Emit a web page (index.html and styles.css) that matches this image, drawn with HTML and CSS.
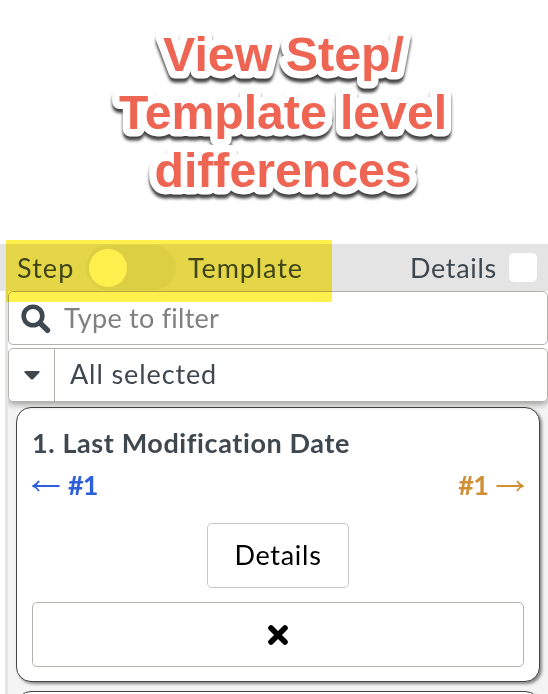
FILE: index.html
```html
<!DOCTYPE html>
<html lang="en">
<head>
<meta charset="utf-8">
<title>Differences</title>
<link rel="stylesheet" href="styles.css">
</head>
<body>
<header class="hero">
  <svg class="hero-title" width="548" height="240" viewBox="0 0 548 240">
    <defs>
      <g id="lines">
        <text x="283.5" y="71" textLength="241" lengthAdjust="spacingAndGlyphs">View Step/</text>
        <text x="283" y="129" textLength="328" lengthAdjust="spacingAndGlyphs">Template level</text>
        <text x="283" y="187" textLength="257" lengthAdjust="spacingAndGlyphs">differences</text>
      </g>
    </defs>
    <use class="hero-outline" href="#lines"/>
    <use class="hero-fill" href="#lines"/>
  </svg>
</header>
<div class="toolbar">
  <span class="label step">Step</span>
  <span class="toggle"><span class="knob"></span></span>
  <span class="label template">Template</span>
  <span class="label details">Details</span>
  <span class="checkbox"></span>
  <div class="highlight"></div>
</div>
<main class="panel">
  <div class="filters">
    <div class="field">
      <svg class="search" width="30" height="30" viewBox="0 0 30 30"><circle cx="12" cy="12" r="9.3" fill="none" stroke="currentColor" stroke-width="4.6"/><path d="M19.5 19.5L26.5 26.3" stroke="currentColor" stroke-width="5.4" stroke-linecap="round"/></svg>
      <span class="placeholder">Type to filter</span>
    </div>
    <div class="field select">
      <span class="arrow"><svg width="18" height="11" viewBox="0 0 18 11"><path d="M2 1H16Q17.3 1.4 16.3 2.8L10 9.2Q9 10 8 9.2L1.7 2.8Q.7 1.4 2 1Z" fill="currentColor"/></svg></span>
      <span class="selected">All selected</span>
    </div>
  </div>
  <section class="card">
    <h2>1. Last Modification Date</h2>
    <div class="refs">
      <span class="ref from"><svg width="28" height="12" viewBox="0 0 28 12"><path d="M27.500 6H1.500M7 1Q5 4.500 1 6Q5 7.500 7 11"/></svg><b>#1</b></span>
      <span class="ref to"><b>#1</b><svg width="28" height="12" viewBox="0 0 28 12"><path d="M.5 6H26.500M21 1Q23 4.500 27 6Q23 7.500 21 11"/></svg></span>
    </div>
    <div class="button details-button">Details</div>
    <div class="button close"><svg width="22" height="22" viewBox="0 0 22 22"><path d="M4 4L18 18M18 4L4 18" stroke="#000" stroke-width="5.600" stroke-linecap="round"/></svg></div>
  </section>
  <section class="card next"></section>
</main>
</body>
</html>
```

FILE: styles.css
```css
* { box-sizing: border-box; }
body {
  margin: 0;
  width: 548px;
  height: 694px;
  overflow: hidden;
  background: #fff;
  color: #3f484f;
  font: 27px/32px Lato, "Open Sans", sans-serif;
  font-variant-ligatures: none;
}
svg { display: block; flex: none; }
.hero { height: 244px; }
.hero-title {
  font: bold 49px "Liberation Sans", Arial, sans-serif;
  text-anchor: middle;
}
.hero-outline {
  fill: #fff;
  stroke: #fff;
  stroke-width: 15px;
  stroke-linejoin: round;
  filter: drop-shadow(0 4px 1.5px #444);
}
.hero-fill { fill: #ee6554; }
.toolbar {
  position: relative;
  display: flex;
  align-items: center;
  height: 47px;
  padding: 0 11px 0 17px;
  background: #e4e4e4;
}
.label { letter-spacing: .9px; }
.step { width: 69px; letter-spacing: 1.1px; }
.toggle {
  width: 90px;
  height: 45px;
  margin-right: 12px;
  padding: 4px 3px;
  border-radius: 23px;
  background: #dcdcdc;
}
.knob { display: block; width: 38px; height: 38px; border-radius: 50%; background: #fff; }
.details { margin-left: auto; margin-right: 12px; letter-spacing: .7px; }
.checkbox { width: 28px; height: 29px; border-radius: 5px; background: #fff; }
.highlight {
  position: absolute;
  z-index: 2;
  left: 6px;
  top: -4px;
  width: 326px;
  height: 62px;
  background: #fff04e;
  mix-blend-mode: multiply;
}
.panel {
  height: 403px;
  margin-left: 5px;
  border-left: 3px solid #e4e4e4;
  background: #f4f4f4;
  overflow: hidden;
}
.filters {
  position: relative;
  display: flex;
  flex-direction: column;
  gap: 3px;
  height: 111px;
  border-radius: 0 0 5px 5px;
  background: #fff;
  box-shadow: 0 2px 7px rgba(0,0,0,.4);
}
.field {
  display: flex;
  align-items: center;
  height: 54px;
  border: 1px solid #b3b3ad;
  border-radius: 5px;
  background: #fff;
}
.search { margin: 1px 13px 0 12px; }
.placeholder { color: #808080; letter-spacing: .25px; }
.arrow {
  display: flex;
  align-items: center;
  justify-content: center;
  width: 46px;
  height: 100%;
  border-right: 1px solid #b3b3ad;
}
.selected { margin-left: 15px; padding-bottom: 2px; letter-spacing: .9px; }
.card {
  height: 275px;
  margin: 5px 8px 0;
  padding: 19px 15px 0;
  border: 1px solid #444;
  border-radius: 15px;
  background: #fff;
  box-shadow: 2px 2px 3px rgba(0,0,0,.45);
}
.card.next { margin-top: 9px; }
h2 { margin: 0; font-size: 27px; line-height: 32px; letter-spacing: .6px; }
.refs { display: flex; justify-content: space-between; height: 32px; margin-top: 10px; letter-spacing: -.8px; }
.ref { display: flex; align-items: center; gap: 8px; }
.ref svg { margin-top: 2px; }
.ref path { fill: none; stroke: currentColor; stroke-width: 1.8; }
.from { color: #2c5fd9; }
.to { color: #d08f35; }
.button {
  display: flex;
  align-items: center;
  justify-content: center;
  height: 65px;
  border: 1px solid #b3b3ad;
  border-radius: 5px;
  color: #000;
}
.details-button { width: 142px; margin: 22px auto 14px; padding-bottom: 2px; border-color: #c6c6c6; letter-spacing: .7px; }
```
